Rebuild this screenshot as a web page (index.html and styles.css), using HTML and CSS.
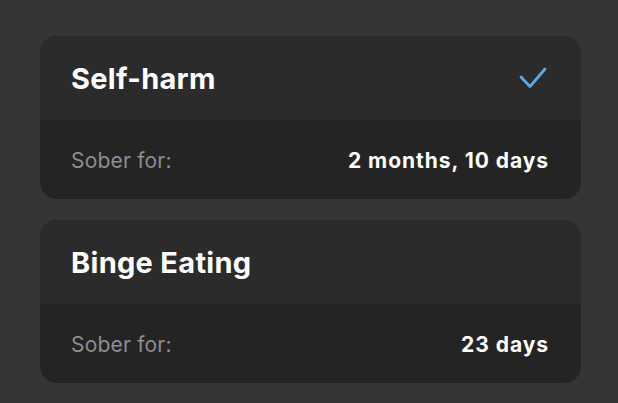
FILE: index.html
```html
<!DOCTYPE html>
<html>
<head>
<meta charset="utf-8">
<link rel="stylesheet" href="styles.css">
</head>
<body>
<div class="list">
  <div class="card">
    <div class="card-head">
      <span class="title">Self-harm</span>
      <svg class="check" width="28" height="22" viewBox="0 0 28 22"><path d="M2 10 L11 19.5 L26 2" fill="none" stroke="#5aa8e4" stroke-width="2.8" stroke-linecap="round" stroke-linejoin="round"/></svg>
    </div>
    <div class="card-foot">
      <span class="label">Sober for:</span>
      <span class="value">2 months, 10 days</span>
    </div>
  </div>
  <div class="card">
    <div class="card-head">
      <span class="title">Binge Eating</span>
    </div>
    <div class="card-foot">
      <span class="label">Sober for:</span>
      <span class="value">23 days</span>
    </div>
  </div>
</div>
</body>
</html>
```
FILE: styles.css
```css
html, body {
  margin: 0;
  padding: 0;
  background: #353535;
  font-family: Inter, "Noto Sans", sans-serif;
}
.list {
  padding: 36px 37px 0 40px;
  display: flex;
  flex-direction: column;
  gap: 21px;
}
.card {
  width: 541px;
  border-radius: 17px;
  overflow: hidden;
  background: #242424;
}
.card-head {
  height: 84px;
  background: #2b2b2b;
  display: flex;
  align-items: center;
  justify-content: space-between;
  padding: 0 34px 0 31px;
  box-sizing: border-box;
}
.title {
  color: #ffffff;
  font-size: 29px;
  font-weight: 700;
  letter-spacing: 0.3px;
}
.check {
  display: block;
}
.card-foot {
  height: 79px;
  display: flex;
  align-items: center;
  justify-content: space-between;
  padding: 1px 32px 0 31px;
  box-sizing: border-box;
}
.label {
  color: #8d8d92;
  font-size: 21px;
  font-weight: 400;
  letter-spacing: 0.2px;
}
.value {
  color: #ffffff;
  font-size: 21px;
  font-weight: 700;
  letter-spacing: 0.95px;
}
```
